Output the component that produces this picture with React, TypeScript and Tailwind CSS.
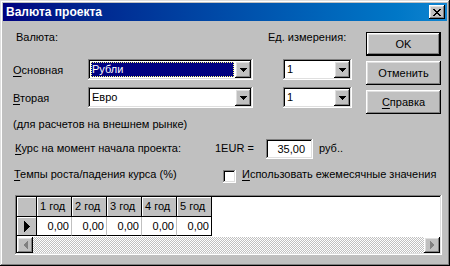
import React from 'react'

const raised =
  'shadow-[inset_-1px_-1px_0_#000,inset_1px_1px_0_#fff,inset_-2px_-2px_0_#808080,inset_2px_2px_0_#dfdfdf]'
const sunken =
  'shadow-[inset_-1px_-1px_0_#fff,inset_1px_1px_0_#808080,inset_-2px_-2px_0_#dfdfdf,inset_2px_2px_0_#000]'

function DownArrow() {
  return (
    <svg width="7" height="4" viewBox="0 0 7 4" shapeRendering="crispEdges">
      <path d="M0 0h7v1h-1v1h-1v1h-1v1h-1v-1h-1v-1h-1v-1h-1z" fill="#000" />
    </svg>
  )
}

function Combo({ value, className, selected }: { value: string; className: string; selected?: boolean }) {
  return (
    <div className={`flex h-[21px] bg-white p-[2px] ${sunken} ${className}`}>
      <div className="flex flex-1 items-center pl-px pr-px">
        {selected ? (
          <div className="flex h-[15px] flex-1 items-center bg-[#000080] pl-px text-white outline-1 outline-dotted outline-offset-[-1px] outline-[#ffff80]">
            {value}
          </div>
        ) : (
          <span className="pl-px">{value}</span>
        )}
      </div>
      <div className={`flex h-[17px] w-[16px] items-center justify-center bg-[#c0c0c0] ${raised}`}>
        <DownArrow />
      </div>
    </div>
  )
}

function Button({ children, isDefault }: { children: React.ReactNode; isDefault?: boolean }) {
  return (
    <div className={`h-[24px] w-[75px] ${isDefault ? 'border border-black' : ''}`}>
      <div className={`flex h-full w-full items-center justify-center bg-[#c0c0c0] ${raised}`}>{children}</div>
    </div>
  )
}

function U({ children }: { children: React.ReactNode }) {
  return <span className="underline underline-offset-[2px]">{children}</span>
}

function ScrollArrow({ dir }: { dir: 'left' | 'right' }) {
  return (
    <div className={`flex h-[16px] w-[16px] items-center justify-center bg-[#c0c0c0] ${raised}`}>
      <svg width="5" height="8" viewBox="0 0 5 8" shapeRendering="crispEdges">
        {dir === 'left' ? (
          <>
            <path d="M4 0h1v8h-1z M3 1h1v6h-1z M2 2h1v4h-1z M1 3h1v2h-1z" fill="#808080" />
          </>
        ) : (
          <>
            <path d="M0 0h1v8h-1z M1 1h1v6h-1z M2 2h1v4h-1z M3 3h1v2h-1z" fill="#808080" />
          </>
        )}
      </svg>
    </div>
  )
}

const years = ['1 год', '2 год', '3 год', '4 год', '5 год']

export default function App() {
  return (
    <div
      className="flex h-[266px] w-[450px] flex-col bg-[#c0c0c0] p-[3px] font-['Liberation_Sans',Arial,sans-serif] text-[11px] leading-[13px] text-black shadow-[inset_-1px_-1px_0_#000,inset_1px_1px_0_#dfdfdf,inset_-2px_-2px_0_#808080,inset_2px_2px_0_#fff]"
    >
      {/* title bar */}
      <div className="flex h-[18px] items-center bg-linear-to-r from-[#000080] to-[#1084d0] pl-[3px] pr-[2px]">
        <span className="flex-1 text-[12px] font-bold text-white">Валюта проекта</span>
        <div className={`flex h-[14px] w-[16px] items-center justify-center bg-[#c0c0c0] ${raised}`}>
          <svg width="8" height="7" viewBox="0 0 8 7" shapeRendering="crispEdges">
            <path
              d="M0 0h2v1h-2z M6 0h2v1h-2z M1 1h2v1h-2z M5 1h2v1h-2z M2 2h4v1h-4z M3 3h2v1h-2z M2 4h4v1h-4z M1 5h2v1h-2z M5 5h2v1h-2z M0 6h2v1h-2z M6 6h2v1h-2z"
              fill="#000"
            />
          </svg>
        </div>
      </div>

      {/* body */}
      <div className="flex flex-col pl-[10px] pr-[6px]">
        <div className="flex">
          <div className="flex flex-1 flex-col pt-[10px]">
            <div className="flex pl-[3px]">
              <span className="w-[252px]">Валюта:</span>
              <span>Ед. измерения:</span>
            </div>
            <div className="mt-[15px] flex">
              <span className="w-[75px] pt-[5px]">
                <U>О</U>сновная
              </span>
              <Combo value="Рубли" className="w-[165px]" selected />
              <Combo value="1" className="ml-[30px] w-[69px]" />
            </div>
            <div className="mt-[7px] flex">
              <span className="w-[75px] pt-[5px]">
                <U>В</U>торая
              </span>
              <Combo value="Евро" className="w-[165px]" />
              <Combo value="1" className="ml-[30px] w-[69px]" />
            </div>
            <div className="mt-[10px]">(для расчетов на внешнем рынке)</div>
          </div>
          <div className="flex w-[75px] flex-col gap-[5px] pt-[11px]">
            <Button isDefault>OK</Button>
            <Button>Отменить</Button>
            <Button>
              <span>
                <U>С</U>правка
              </span>
            </Button>
          </div>
        </div>

        <div className="mt-[8px] flex h-[20px]">
          <span className="w-[202px] pl-[2px] pt-[3px]">
            <U>К</U>урс на момент начала проекта:
          </span>
          <span className="w-[51px] pt-[3px]">1EUR =</span>
          <div className={`flex h-[20px] w-[47px] items-center justify-end bg-white pr-[8px] ${sunken}`}>35,00</div>
          <span className="ml-[6px] pt-[3px]">руб..</span>
        </div>

        <div className="mt-[9px] flex">
          <span className="w-[210px] pl-px">
            <U>Т</U>емпы роста/падения курса (%)
          </span>
          <div className={`mt-[2px] h-[13px] w-[13px] bg-white ${sunken}`} />
          <span className="ml-[6px]">
            <U>И</U>спользовать ежемесячные значения
          </span>
        </div>

        {/* grid */}
        <div className={`ml-[2px] mt-[12px] flex h-[60px] w-[427px] flex-col bg-white p-[2px] ${sunken}`}>
          <div className="flex">
            <div className={`h-[20px] w-[20px] border-r border-b border-black bg-[#c0c0c0] shadow-[inset_1px_1px_0_#fff]`} />
            {years.map((y) => (
              <div
                key={y}
                className="flex h-[20px] w-[35px] items-center border-r border-b border-black bg-[#c0c0c0] pl-[3px] shadow-[inset_1px_1px_0_#fff]"
              >
                {y}
              </div>
            ))}
          </div>
          <div className="flex">
            <div className="flex h-[19px] w-[20px] items-center justify-center border-r border-b border-black bg-[#c0c0c0] shadow-[inset_1px_1px_0_#fff]">
              <svg width="6" height="11" viewBox="0 0 6 11" shapeRendering="crispEdges">
                <path d="M0 0h1v11h-1z M1 1h1v9h-1z M2 2h1v7h-1z M3 3h1v5h-1z M4 4h1v3h-1z M5 5h1v1h-1z" fill="#000" />
              </svg>
            </div>
            {years.map((y, i) => (
              <div
                key={y}
                className={`flex h-[19px] w-[35px] items-center justify-end border-b border-black pr-[2px] ${
                  i === years.length - 1 ? 'border-r border-r-black' : 'border-r border-r-[#c0c0c0]'
                }`}
              >
                0,00
              </div>
            ))}
          </div>
          <div className="mt-auto flex h-[16px]">
            <ScrollArrow dir="left" />
            <div className="flex-1 bg-[repeating-conic-gradient(#c0c0c0_0%_25%,#fff_0%_50%)] bg-size-[2px_2px]" />
            <ScrollArrow dir="right" />
          </div>
        </div>
      </div>
    </div>
  )
}
